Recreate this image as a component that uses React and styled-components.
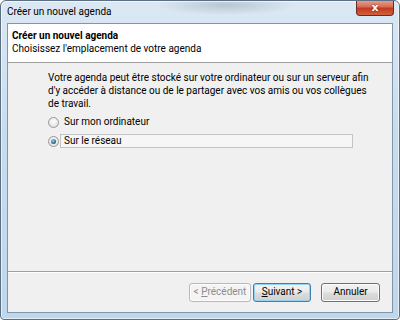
import React from "react";
import styled, { createGlobalStyle } from "styled-components";

const FONT = `Roboto, "Noto Sans", Arial, sans-serif`;

const Global = createGlobalStyle`
  html, body { margin: 0; padding: 0; background: #ffffff; }
  body { font-family: ${FONT}; font-size: 10px; }
  * { box-sizing: border-box; }
`;

const Frame = styled.div`
  width: 400px;
  height: 320px;
  display: flex;
  flex-direction: column;
  border: 1px solid #5d6f82;
  border-radius: 6px 6px 4px 4px;
  background:
    radial-gradient(ellipse 70px 10px at 225px 4px, rgba(120, 135, 150, 0.35), rgba(120, 135, 150, 0) 100%),
    linear-gradient(180deg, #dbe8f4 0%, #c9dcee 40%, #bfd6ec 100%);
  box-shadow: inset 0 0 0 1px rgba(255, 255, 255, 0.6);
  overflow: hidden;
`;

const TitleBar = styled.div`
  height: 22px;
  flex: none;
  display: flex;
  align-items: flex-start;
  justify-content: space-between;
  padding: 0 5px 0 6px;
`;

const Title = styled.span`
  margin-top: 5px;
  color: #000;
`;

const Close = styled.div`
  width: 38px;
  height: 16px;
  margin-top: -1px;
  border: 1px solid #6b2a22;
  border-top: none;
  border-radius: 0 0 4px 4px;
  background: linear-gradient(180deg, #e8a493 0%, #d86c55 45%, #c2391f 55%, #d2603e 100%);
  display: flex;
  align-items: center;
  justify-content: center;
  color: #fff;
  font: bold 11px "DejaVu Sans", sans-serif;
  text-shadow: 0 0 2px #5a1a10;
`;

const Client = styled.div`
  flex: 1;
  margin: 0 6px 6px 6px;
  border: 1px solid #8196ab;
  display: flex;
  flex-direction: column;
  background: #f0f0f0;
`;

const Header = styled.div`
  background: #ffffff;
  height: 39px;
  padding: 5px 0 0 4px;
  border-bottom: 1px solid #a0a0a0;
  line-height: 13px;
`;

const HeaderTitle = styled.div`
  font-weight: bold;
  color: #000;
`;

const HeaderSub = styled.div`
  color: #000;
`;

const Body = styled.div`
  flex: 1;
  padding: 8px 30px 0 40px;
  border-bottom: 1px solid #a0a0a0;
  box-shadow: 0 1px 0 #ffffff;
`;

const Para = styled.p`
  margin: 0;
  line-height: 13px;
  color: #000;
  white-space: nowrap;
`;

const Options = styled.div`
  display: flex;
  flex-direction: column;
  gap: 5px;
  margin-top: 5px;
  padding-right: 9px;
`;

const Option = styled.label`
  display: flex;
  align-items: center;
  gap: 1px;
  height: 14px;
`;

const Radio = styled.span`
  width: 11px;
  height: 11px;
  border-radius: 50%;
  border: 1px solid #979797;
  background: radial-gradient(circle at 50% 40%, #ffffff 0%, #e8e8e8 60%, #d5d5d5 100%);
  display: flex;
  align-items: center;
  justify-content: center;
  flex: none;
  &::after {
    content: "";
    display: ${(p) => (p.$checked ? "block" : "none")};
    width: 5px;
    height: 5px;
    border-radius: 50%;
    background: radial-gradient(circle at 40% 35%, #9fd0ee 0%, #2e6b93 60%, #1a3c5a 100%);
  }
`;

const OptionText = styled.span`
  flex: ${(p) => (p.$focus ? "1" : "none")};
  padding: 0 3px;
  height: 14px;
  line-height: 12px;
  border: 1px ${(p) => (p.$focus ? "solid #c4c4c4" : "solid transparent")};
  background: ${(p) => (p.$focus ? "#f6f6f6" : "transparent")};
  color: #000;
`;

const Footer = styled.div`
  height: 40px;
  display: flex;
  align-items: center;
  justify-content: flex-end;
  padding: 0 12px 0 0;
`;

const Button = styled.button`
  height: 19px;
  width: ${(p) => p.$w}px;
  margin-left: ${(p) => p.$ml || 0}px;
  padding: 0;
  font: 10px ${FONT};
  color: ${(p) => (p.disabled ? "#8d8d8d" : "#000")};
  border: 1px solid ${(p) => (p.disabled ? "#b8b8b8" : p.$default ? "#3c7fb1" : "#707070")};
  border-radius: 3px;
  background: ${(p) =>
    p.disabled
      ? "#f4f4f4"
      : "linear-gradient(180deg, #f2f2f2 0%, #ebebeb 48%, #dddddd 52%, #cfcfcf 100%)"};
  box-shadow: ${(p) => (p.$default ? "inset 0 0 0 1px #98d1ef" : "inset 0 0 0 1px #fcfcfc")};
  line-height: 16px;
  white-space: nowrap;
`;

export default function App() {
  return (
    <>
      <Global />
      <Frame>
        <TitleBar>
          <Title>Créer un nouvel agenda</Title>
          <Close>x</Close>
        </TitleBar>
        <Client>
          <Header>
            <HeaderTitle>Créer un nouvel agenda</HeaderTitle>
            <HeaderSub>Choisissez l'emplacement de votre agenda</HeaderSub>
          </Header>
          <Body>
            <Para>
              Votre agenda peut être stocké sur votre ordinateur ou sur un serveur afin
              <br />
              d'y accéder à distance ou de le partager avec vos amis ou vos collègues
              <br />
              de travail.
            </Para>
            <Options>
              <Option>
                <Radio />
                <OptionText>Sur mon ordinateur</OptionText>
              </Option>
              <Option>
                <Radio $checked />
                <OptionText $focus>Sur le réseau</OptionText>
              </Option>
            </Options>
          </Body>
          <Footer>
            <Button disabled $w={62}>
              &lt; <u>P</u>récédent
            </Button>
            <Button $default $w={58} $ml={2}>
              <u>S</u>uivant &gt;
            </Button>
            <Button $w={59} $ml={10}>
              Annuler
            </Button>
          </Footer>
        </Client>
      </Frame>
    </>
  );
}
